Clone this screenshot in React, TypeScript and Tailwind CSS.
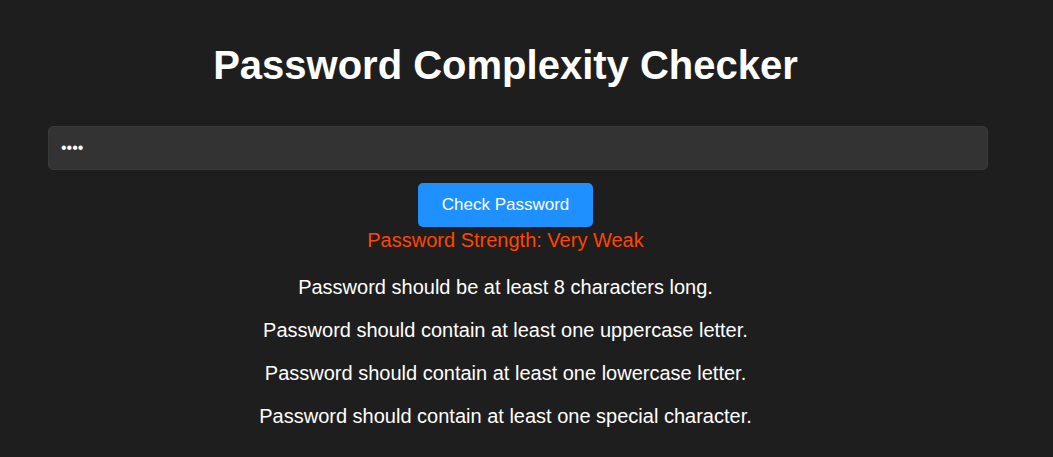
const rules = [
  "Password should be at least 8 characters long.",
  "Password should contain at least one uppercase letter.",
  "Password should contain at least one lowercase letter.",
  "Password should contain at least one special character.",
];

export default function App() {
  return (
    <div className="min-h-[457px] bg-[#1e1e1e] text-white font-['Liberation_Sans',Arial,sans-serif] px-[48px]">
      <div className="w-[915px] flex flex-col items-center pt-[40px]">
        <h1 className="text-[40px] font-bold leading-[50px]">Password Complexity Checker</h1>
        <input
          type="password"
          defaultValue="abcd"
          className="mt-[36px] w-[940px] self-start h-[44px] rounded-[5px] bg-[#333333] border border-[#3a3a3a] px-[12px] text-[16px] text-white outline-none"
        />
        <button className="mt-[13px] w-[175px] h-[44px] rounded-[5px] bg-[#1e90ff] text-[17px] text-white">
          Check Password
        </button>
        <p className="text-[20px] leading-[26px] text-[#ff4500]">Password Strength: Very Weak</p>
        <ul className="mt-[22px] flex flex-col gap-[19px] items-center">
          {rules.map((r) => (
            <li key={r} className="text-[20px] leading-[24px]">{r}</li>
          ))}
        </ul>
      </div>
    </div>
  );
}
